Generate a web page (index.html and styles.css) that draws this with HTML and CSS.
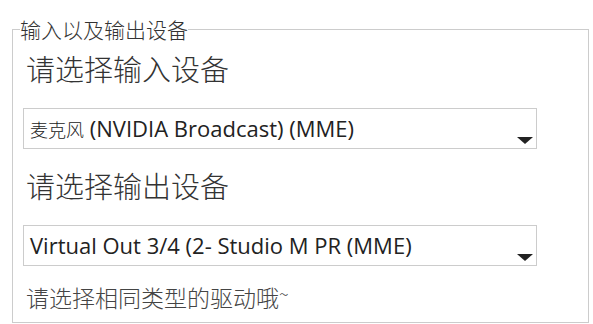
FILE: index.html
```
<!DOCTYPE html>
<html lang="zh-CN">
<head>
    <meta charset="UTF-8">
    <meta name="viewport" content="width=device-width, initial-scale=1.0">
    <title>输入以及输出设备</title>
    <link rel="stylesheet" href="styles.css">
</head>
<body>

    <fieldset class="devices">
        <legend>输入以及输出设备</legend>

        <div class="pickTitle">请选择输入设备</div>
        <div class="fakeSelect">
            <span class="selected"><span class="cjk">麦克风</span> (NVIDIA Broadcast) (MME)</span>
            <span class="arrow"></span>
        </div>

        <div class="pickTitle">请选择输出设备</div>
        <div class="fakeSelect">
            <span class="selected">Virtual Out 3/4 (2- Studio M PR (MME)</span>
            <span class="arrow"></span>
        </div>

        <!-- hint under the selects -->
        <div class="hint">请选择相同类型的驱动哦<span class="tilde">~</span></div>
    </fieldset>

</body>
</html>
```

FILE: styles.css
```
body{
    margin: 0;
    padding: 19px 4px 0 12px;
    background: #fff;
    font-family: "Open Sans", "Noto Sans CJK SC", sans-serif;
    color: #222;
}

.devices{
    margin: 0;
    border: 1px solid #ccc;
    padding: 11px 51px 12px 10px;
}

.devices legend{
    padding: 0;
    margin-left: -3px;
    font-family: "Noto Sans CJK SC", sans-serif;
    font-size: 21px;
    line-height: 20px;
    font-weight: 300;
    color: #333;
}

.pickTitle{
    padding: 0 0 4px 3px;
    font-family: "Noto Sans CJK SC", sans-serif;
    font-size: 29px;
    line-height: 36px;
    font-weight: 300;
    color: #333;
}

.fakeSelect{
    display: flex;
    justify-content: space-between;
    height: 39px;
    margin: 18px 0 18px;
    border: 1px solid #ccc;
    padding: 0 3px 0 6px;
}
.selected{
    font-size: 22px;
    line-height: 39px;
    white-space: nowrap;
}
.cjk{
    font-family: "Noto Sans CJK SC", sans-serif;
    font-size: 18px;
    font-weight: 300;
}
.arrow{
    align-self: flex-end;
    margin-bottom: 4px;
    width: 0;
    height: 0;
    border-left: 8px solid transparent;
    border-right: 8px solid transparent;
    border-top: 7px solid #222;
}

.hint{
    padding-left: 3px;
    font-family: "Noto Sans CJK SC", sans-serif;
    font-size: 23px;
    line-height: 26px;
    font-weight: 300;
    color: #444;
}
.tilde{
    vertical-align: 0.35em;
    font-size: 18px;
    line-height: 0;
}
```
